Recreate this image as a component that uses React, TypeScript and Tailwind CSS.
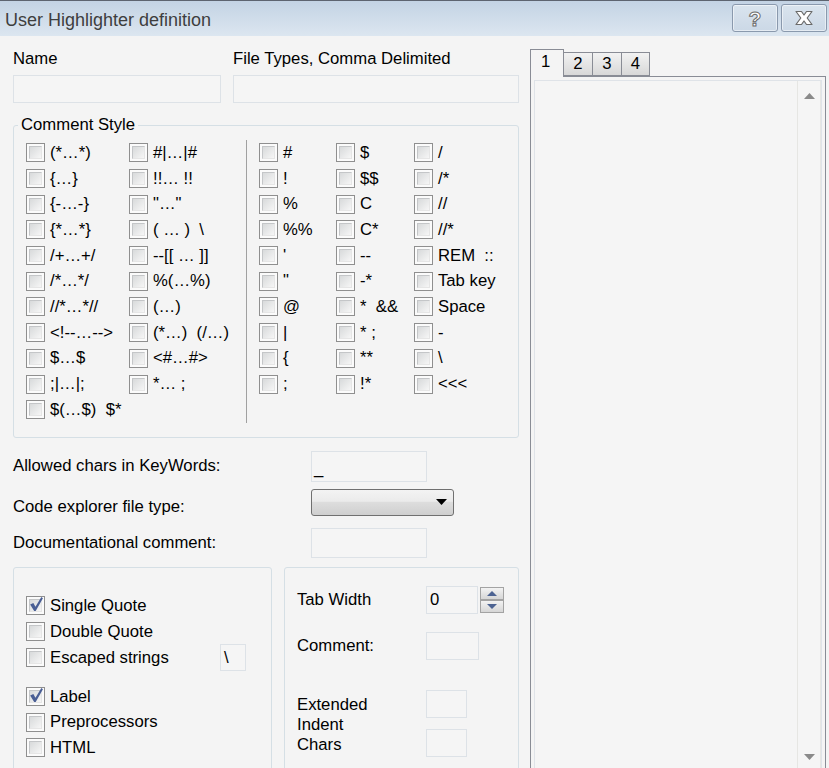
import React from 'react';

const col1 = ['(*…*)', '{…}', '{-…-}', '{*…*}', '/+…+/', '/*…*/', '//*…*//', '<!--…-->', '$…$', ';|…|;', '$(…$)  $*'];
const col2 = ['#|…|#', '!!… !!', '"…"', '( … )  \\', '--[[ … ]]', '%(…%)', '(…)', '(*…)  (/…)', '<#…#>', '*… ;'];
const col3 = ['#', '!', '%', '%%', "'", '"', '@', '|', '{', ';'];
const col4 = ['$', '$$', 'C', 'C*', '--', '-*', '*  &&', '* ;', '**', '!*'];
const col5 = ['/', '/*', '//', '//*', 'REM  ::', 'Tab key', 'Space', '-', '\\', '<<<'];

function Box({ checked }: { checked?: boolean }) {
  return (
    <span className="flex h-[19px] w-[19px] shrink-0 border border-[#8f8f8f] bg-[#fbfbfb] p-[2px]">
      <span className="relative flex h-full w-full items-center justify-center border border-t-[#c4c6c8] border-l-[#c4c6c8] border-r-[#e6e6e6] border-b-[#e6e6e6] bg-gradient-to-br from-[#d8dadb] to-[#f6f6f6]">
        {checked && (
          <svg width="16" height="16" viewBox="0 0 15 15" className="absolute -left-[2px] -top-[4px]">
            <path d="M2 8 L5 6.5 L7 10 L12.5 1 L14 2 L7.2 14 L5.8 14 Z" fill="#4a5f95" />
          </svg>
        )}
      </span>
    </span>
  );
}

function Check({ label, checked, h = 'h-[25.7px]' }: { label: string; checked?: boolean; h?: string }) {
  return (
    <div className={`flex items-center gap-[5px] whitespace-pre ${h}`}>
      <Box checked={checked} />
      <span className="leading-[18px]">{label}</span>
    </div>
  );
}

function Field({ className = '', children }: { className?: string; children?: React.ReactNode }) {
  return (
    <div className={`flex items-center border border-[#dde2e7] bg-[#f5f5f5] px-[3px] leading-[18px] ${className}`}>
      {children}
    </div>
  );
}

function SpinBtn({ up }: { up?: boolean }) {
  return (
    <div className="flex h-[13px] w-[24px] items-center justify-center border border-[#a3a3a3] bg-gradient-to-b from-[#f3f3f3] to-[#d6d6d6]">
      <svg width="10" height="5" viewBox="0 0 10 5">
        <path d={up ? 'M0 5 L5 0 L10 5 Z' : 'M0 0 L10 0 L5 5 Z'} fill="#4d6392" />
      </svg>
    </div>
  );
}

export default function App() {
  return (
    <div className="flex h-[768px] w-[829px] flex-col overflow-hidden bg-[#f4f4f4] font-['Liberation_Sans',Arial,sans-serif] text-[16.7px] text-black">
      {/* Title bar */}
      <div className="flex h-[36px] shrink-0 items-center border-t border-[#5d6470] bg-gradient-to-b from-[#c3d3e4] to-[#dce6f0] pl-[5px] pr-[2px]">
        <span className="flex-1 pt-[3px] text-[18px] text-[#3e3e3e]">User Highlighter definition</span>
        <div className="mb-[1px] flex gap-[3px]">
          <div className="flex h-[28px] w-[46px] items-center justify-center rounded-[3px] border border-[#8a99ad] bg-gradient-to-b from-[#dae4ee] to-[#cbd8e6] shadow-[inset_0_0_0_1px_rgba(255,255,255,0.5)]">
            <span className="text-[21px] font-bold leading-none text-white [-webkit-text-stroke:1px_#6a6a6a]">?</span>
          </div>
          <div className="flex h-[28px] w-[46px] items-center justify-center rounded-[3px] border border-[#8a99ad] bg-gradient-to-b from-[#dae4ee] to-[#cbd8e6] shadow-[inset_0_0_0_1px_rgba(255,255,255,0.5)]">
            <svg width="20" height="16" viewBox="0 0 20 16">
              <path d="M2 1.5 L7.5 1.5 L10 5 L12.5 1.5 L18 1.5 L13.2 8 L18 14.5 L12.5 14.5 L10 11 L7.5 14.5 L2 14.5 L6.8 8 Z" fill="#fff" stroke="#6a6a6a" strokeWidth="1.2" strokeLinejoin="round" />
            </svg>
          </div>
        </div>
      </div>

      <div className="flex min-h-0 flex-1">
        {/* Left column */}
        <div className="w-[530px] shrink-0 pl-[13px] pr-[11px] pt-[14px]">
          <div className="flex gap-[12px]">
            <div className="w-[208px]">
              <div className="leading-[18px]">Name</div>
              <Field className="mt-[7px] h-[28px]" />
            </div>
            <div className="flex-1">
              <div className="leading-[18px]">File Types, Comma Delimited</div>
              <Field className="mt-[7px] h-[28px]" />
            </div>
          </div>

          <fieldset className="m-0 mt-[13px] rounded-[3px] border border-[#d5dfe5] pb-[14px] pl-[12px] pt-[6px]">
            <legend className="-ml-[8px] px-[3px] leading-[18px]">Comment Style</legend>
            <div className="flex">
              <div className="w-[103px]">{col1.map((t) => <Check key={t} label={t} />)}</div>
              <div className="w-[117px]">{col2.map((t) => <Check key={t} label={t} />)}</div>
              <div className="w-px self-stretch bg-[#a0a0a0]" />
              <div className="ml-[12px] w-[77px]">{col3.map((t) => <Check key={t} label={t} />)}</div>
              <div className="w-[78px]">{col4.map((t) => <Check key={t} label={t} />)}</div>
              <div className="flex-1">{col5.map((t) => <Check key={t} label={t} />)}</div>
            </div>
          </fieldset>

          <div className="mt-[13px] flex h-[31px] items-center">
            <span className="w-[298px] leading-[18px]">Allowed chars in KeyWords:</span>
            <Field className="h-[31px] w-[116px] pl-[2px] pt-[5px]">_</Field>
          </div>
          <div className="mt-[7px] flex h-[27px] items-center">
            <span className="w-[298px] pt-[9px] leading-[18px]">Code explorer file type:</span>
            <div className="flex h-[27px] w-[143px] items-center justify-end rounded-[3px] border border-[#707070] bg-[linear-gradient(to_bottom,#f3f3f3_0%,#ebebeb_45%,#dddddd_50%,#cfcfcf_100%)] pr-[6px]">
              <svg width="11" height="6" viewBox="0 0 11 6">
                <path d="M0 0 L11 0 L5.5 6 Z" fill="#000" />
              </svg>
            </div>
          </div>
          <div className="mt-[12px] flex h-[30px] items-center">
            <span className="w-[298px] leading-[18px]">Documentational comment:</span>
            <Field className="h-[30px] w-[116px]" />
          </div>

          <div className="mt-[9px] flex gap-[12px]">
            <div className="h-[230px] w-[259px] rounded-[3px] border border-[#d5dfe5] pl-[12px] pt-[25px]">
              <Check label="Single Quote" checked h="h-[26px]" />
              <Check label="Double Quote" h="h-[26px]" />
              <div className="flex h-[26px] w-[220px] items-center justify-between">
                <Check label="Escaped strings" h="h-[26px]" />
                <Field className="h-[27px] w-[26px]">\</Field>
              </div>
              <div className="mt-[13px]">
                <Check label="Label" checked h="h-[26px]" />
                <Check label="Preprocessors" h="h-[25.5px]" />
                <Check label="HTML" h="h-[25.5px]" />
              </div>
            </div>
            <div className="h-[230px] flex-1 rounded-[3px] border border-[#d5dfe5] pl-[12px] pt-[18px]">
              <div className="flex items-center">
                <span className="w-[129px] leading-[18px]">Tab Width</span>
                <Field className="h-[28px] w-[52px]">0</Field>
                <div className="ml-[2px] flex flex-col">
                  <SpinBtn up />
                  <SpinBtn />
                </div>
              </div>
              <div className="mt-[18px] flex items-center">
                <span className="w-[129px] leading-[18px]">Comment:</span>
                <Field className="h-[28px] w-[53px]" />
              </div>
              <div className="mt-[30px] flex items-start">
                <div className="w-[129px] pt-[5px] leading-[20px]">
                  Extended
                  <br />
                  Indent
                  <br />
                  Chars
                </div>
                <div className="flex flex-col gap-[11px]">
                  <Field className="h-[28px] w-[41px]" />
                  <Field className="h-[28px] w-[41px]" />
                </div>
              </div>
            </div>
          </div>
        </div>

        {/* Right: tab panel */}
        <div className="flex w-[296px] flex-col pt-[13px]">
          <div className="flex items-end">
            <div className="relative z-10 -mb-px flex h-[28px] w-[34px] items-start border border-b-0 border-[#898c95] bg-[#f4f4f4] pl-[10px] pt-[3px] leading-[18px]">1</div>
            <div className="-ml-px flex h-[24px] w-[30px] items-center justify-center border border-[#898c95] bg-gradient-to-b from-[#f2f2f2] to-[#d8d8d8] leading-[18px]">2</div>
            <div className="-ml-px flex h-[24px] w-[30px] items-center justify-center border border-[#898c95] bg-gradient-to-b from-[#f2f2f2] to-[#d8d8d8] leading-[18px]">3</div>
            <div className="-ml-px flex h-[24px] w-[29px] items-center justify-center border border-[#898c95] bg-gradient-to-b from-[#f2f2f2] to-[#d8d8d8] leading-[18px]">4</div>
          </div>
          <div className="flex flex-1 border border-b-0 border-[#898c95] px-[3px] pt-[3px]">
            <div className="flex flex-1 border border-b-0 border-[#dfe3e8] bg-[#f5f5f5]">
              <div className="flex-1" />
              <div className="flex w-[24px] flex-col items-center justify-between border-l border-r border-[#e6e6e3] pb-[8px] pt-[12px]">
                <svg width="11" height="6" viewBox="0 0 11 6">
                  <path d="M0 6 L5.5 0 L11 6 Z" fill="#8a8a8a" />
                </svg>
                <svg width="11" height="6" viewBox="0 0 11 6">
                  <path d="M0 0 L11 0 L5.5 6 Z" fill="#8a8a8a" />
                </svg>
              </div>
            </div>
          </div>
        </div>
      </div>
    </div>
  );
}
